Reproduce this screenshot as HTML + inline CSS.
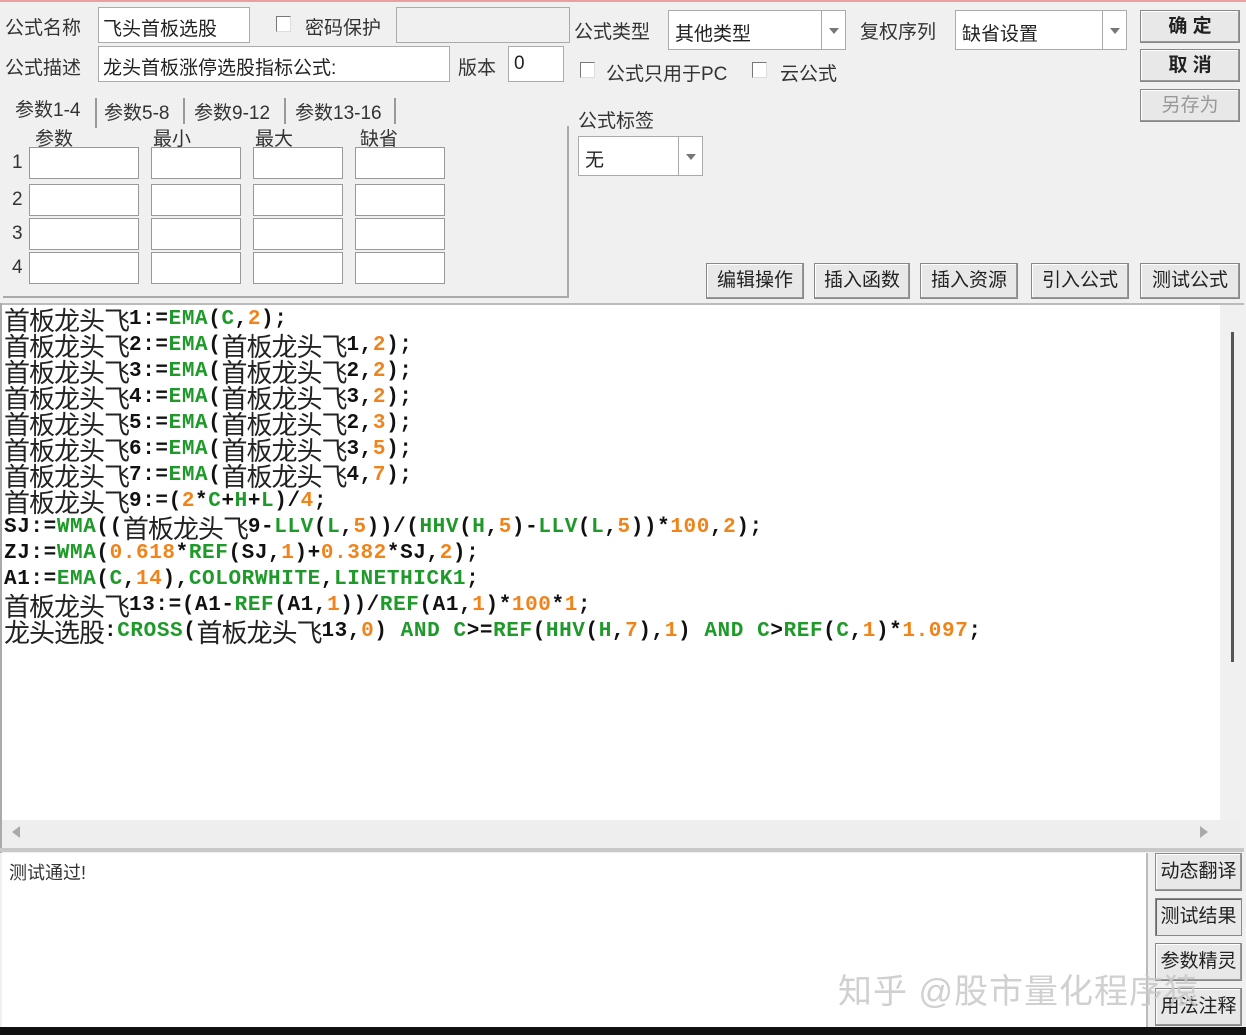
<!DOCTYPE html>
<html><head><meta charset="utf-8"><style>
*{margin:0;padding:0;box-sizing:border-box}
body{width:1246px;height:1035px;background:#f0f0f0;position:relative;overflow:hidden;font-family:"Liberation Sans","Noto Sans CJK SC",sans-serif;font-size:19px;color:#222}
.a{position:absolute}
.lbl{position:absolute;font-size:19px;color:#333;white-space:nowrap}
.box{position:absolute;background:#fff;border:1px solid #aaa}
.btn{position:absolute;background:#e8e8e8;border:1px solid #888;box-shadow:inset -1px -1px 0 #999,inset 1px 1px 0 #fff;text-align:center;font-size:19px;color:#222;white-space:nowrap}
.cb{position:absolute;width:15px;height:16px;border:1px solid #777;border-right-color:#ddd;border-bottom-color:#ddd;background:#fff}
.dd{position:absolute;top:0;right:0;bottom:0;width:24px;border-left:1px solid #aaa}
.dd:after{content:"";position:absolute;left:7px;top:50%;margin-top:-2px;border:5px solid transparent;border-top:6px solid #777;border-bottom:0}
.code{position:absolute;left:4px;top:307px;font-family:"Liberation Mono",monospace;font-weight:bold;font-size:21px;letter-spacing:0.6px;color:#111}
.code div{height:26px;line-height:26px;white-space:pre;overflow:visible}
.c{font-family:"Noto Sans CJK SC",sans-serif;font-weight:normal;font-size:26px;letter-spacing:-1px;color:#222;line-height:26px;display:inline-block;height:26px;vertical-align:top}
.g{color:#1f9a2a}.o{color:#f0841a}
.pin{position:absolute;background:#fff;border:1px solid #999;height:32px}
</style></head><body>
<div class="a" style="left:0;top:0;width:1246px;height:2px;background:#e8a0a0"></div>

<div class="lbl" style="left:5px;top:13px">公式名称</div>
<div class="box" style="left:98px;top:7px;width:152px;height:36px;padding:6px 4px">飞头首板选股</div>
<div class="cb" style="left:276px;top:16px"></div>
<div class="lbl" style="left:305px;top:13px">密码保护</div>
<div class="box" style="left:396px;top:7px;width:174px;height:36px;background:#f0f0f0"></div>

<div class="lbl" style="left:5px;top:53px">公式描述</div>
<div class="box" style="left:98px;top:46px;width:352px;height:36px;padding:6px 4px">龙头首板涨停选股指标公式:</div>
<div class="lbl" style="left:458px;top:53px">版本</div>
<div class="box" style="left:508px;top:46px;width:56px;height:36px;padding:6px 5px">0</div>

<div class="lbl" style="left:15px;top:95px">参数1-4</div>
<div class="a" style="left:95px;top:98px;width:2px;height:30px;background:#999"></div>
<div class="lbl" style="left:104px;top:98px">参数5-8</div>
<div class="a" style="left:183px;top:98px;width:2px;height:26px;background:#999"></div>
<div class="lbl" style="left:194px;top:98px">参数9-12</div>
<div class="a" style="left:284px;top:98px;width:2px;height:26px;background:#999"></div>
<div class="lbl" style="left:295px;top:98px">参数13-16</div>
<div class="a" style="left:394px;top:98px;width:2px;height:26px;background:#999"></div>
<div class="a" style="left:3px;top:126px;width:566px;height:172px;border-right:2px solid #aaa;border-bottom:2px solid #aaa"></div>
<div class="lbl" style="left:35px;top:124px">参数</div>
<div class="lbl" style="left:153px;top:124px">最小</div>
<div class="lbl" style="left:255px;top:124px">最大</div>
<div class="lbl" style="left:360px;top:124px">缺省</div>

<div class="lbl" style="left:12px;top:152px">1</div><div class="lbl" style="left:12px;top:189px">2</div><div class="lbl" style="left:12px;top:223px">3</div><div class="lbl" style="left:12px;top:257px">4</div>
<div class="pin" style="left:29px;top:147px;width:110px"></div><div class="pin" style="left:151px;top:147px;width:90px"></div><div class="pin" style="left:253px;top:147px;width:90px"></div><div class="pin" style="left:355px;top:147px;width:90px"></div>
<div class="pin" style="left:29px;top:184px;width:110px"></div><div class="pin" style="left:151px;top:184px;width:90px"></div><div class="pin" style="left:253px;top:184px;width:90px"></div><div class="pin" style="left:355px;top:184px;width:90px"></div>
<div class="pin" style="left:29px;top:218px;width:110px"></div><div class="pin" style="left:151px;top:218px;width:90px"></div><div class="pin" style="left:253px;top:218px;width:90px"></div><div class="pin" style="left:355px;top:218px;width:90px"></div>
<div class="pin" style="left:29px;top:252px;width:110px"></div><div class="pin" style="left:151px;top:252px;width:90px"></div><div class="pin" style="left:253px;top:252px;width:90px"></div><div class="pin" style="left:355px;top:252px;width:90px"></div>

<div class="lbl" style="left:574px;top:17px">公式类型</div>
<div class="box" style="left:668px;top:10px;width:178px;height:40px;padding:8px 6px">其他类型<div class="dd"></div></div>
<div class="lbl" style="left:860px;top:17px">复权序列</div>
<div class="box" style="left:955px;top:10px;width:172px;height:40px;padding:8px 6px">缺省设置<div class="dd"></div></div>
<div class="cb" style="left:580px;top:62px"></div>
<div class="lbl" style="left:606px;top:59px">公式只用于PC</div>
<div class="cb" style="left:752px;top:62px"></div>
<div class="lbl" style="left:780px;top:59px">云公式</div>
<div class="lbl" style="left:578px;top:106px">公式标签</div>
<div class="box" style="left:578px;top:136px;width:125px;height:40px;padding:8px 6px">无<div class="dd"></div></div>

<div class="btn" style="left:1140px;top:10px;width:100px;height:33px;line-height:31px;font-weight:bold">确 定</div>
<div class="btn" style="left:1140px;top:49px;width:100px;height:33px;line-height:31px;font-weight:bold">取 消</div>
<div class="btn" style="left:1140px;top:89px;width:100px;height:33px;line-height:31px;color:#999">另存为</div>

<div class="btn" style="left:706px;top:263px;width:98px;height:36px;line-height:34px">编辑操作</div>
<div class="btn" style="left:814px;top:263px;width:96px;height:36px;line-height:34px">插入函数</div>
<div class="btn" style="left:920px;top:263px;width:98px;height:36px;line-height:34px">插入资源</div>
<div class="btn" style="left:1031px;top:263px;width:98px;height:36px;line-height:34px">引入公式</div>
<div class="btn" style="left:1140px;top:263px;width:100px;height:36px;line-height:34px">测试公式</div>

<div class="a" style="left:0;top:303px;width:1244px;height:2px;background:#bbb"></div>
<div class="a" style="left:2px;top:305px;width:1218px;height:515px;background:#fff"></div>
<div class="a" style="left:0;top:303px;width:2px;height:550px;background:#aaa"></div>
<div class="a" style="left:1231px;top:332px;width:3px;height:330px;background:#555"></div>
<div class="a" style="left:2px;top:820px;width:1238px;height:28px;background:#eee"></div>
<div class="a" style="left:12px;top:826px;border:6px solid transparent;border-right:8px solid #aaa;border-left:0;height:0"></div>
<div class="a" style="left:1200px;top:826px;border:6px solid transparent;border-left:8px solid #aaa;border-right:0;height:0"></div>
<div class="a" style="left:0;top:848px;width:1244px;height:4px;background:#c8c8c8"></div>

<div class="code"><div><span class="c">首板龙头飞</span>1:=<span class="g">EMA</span>(<span class="g">C</span>,<span class="o">2</span>);</div><div><span class="c">首板龙头飞</span>2:=<span class="g">EMA</span>(<span class="c">首板龙头飞</span>1,<span class="o">2</span>);</div><div><span class="c">首板龙头飞</span>3:=<span class="g">EMA</span>(<span class="c">首板龙头飞</span>2,<span class="o">2</span>);</div><div><span class="c">首板龙头飞</span>4:=<span class="g">EMA</span>(<span class="c">首板龙头飞</span>3,<span class="o">2</span>);</div><div><span class="c">首板龙头飞</span>5:=<span class="g">EMA</span>(<span class="c">首板龙头飞</span>2,<span class="o">3</span>);</div><div><span class="c">首板龙头飞</span>6:=<span class="g">EMA</span>(<span class="c">首板龙头飞</span>3,<span class="o">5</span>);</div><div><span class="c">首板龙头飞</span>7:=<span class="g">EMA</span>(<span class="c">首板龙头飞</span>4,<span class="o">7</span>);</div><div><span class="c">首板龙头飞</span>9:=(<span class="o">2</span>*<span class="g">C</span>+<span class="g">H</span>+<span class="g">L</span>)/<span class="o">4</span>;</div><div>SJ:=<span class="g">WMA</span>((<span class="c">首板龙头飞</span>9-<span class="g">LLV</span>(<span class="g">L</span>,<span class="o">5</span>))/(<span class="g">HHV</span>(<span class="g">H</span>,<span class="o">5</span>)-<span class="g">LLV</span>(<span class="g">L</span>,<span class="o">5</span>))*<span class="o">100</span>,<span class="o">2</span>);</div><div>ZJ:=<span class="g">WMA</span>(<span class="o">0.618</span>*<span class="g">REF</span>(SJ,<span class="o">1</span>)+<span class="o">0.382</span>*SJ,<span class="o">2</span>);</div><div>A1:=<span class="g">EMA</span>(<span class="g">C</span>,<span class="o">14</span>),<span class="g">COLORWHITE</span>,<span class="g">LINETHICK1</span>;</div><div><span class="c">首板龙头飞</span>13:=(A1-<span class="g">REF</span>(A1,<span class="o">1</span>))/<span class="g">REF</span>(A1,<span class="o">1</span>)*<span class="o">100</span>*<span class="o">1</span>;</div><div><span class="c">龙头选股</span>:<span class="g">CROSS</span>(<span class="c">首板龙头飞</span>13,<span class="o">0</span>) <span class="g">AND</span> <span class="g">C</span>&gt;=<span class="g">REF</span>(<span class="g">HHV</span>(<span class="g">H</span>,<span class="o">7</span>),<span class="o">1</span>) <span class="g">AND</span> <span class="g">C</span>&gt;<span class="g">REF</span>(<span class="g">C</span>,<span class="o">1</span>)*<span class="o">1.097</span>;</div></div>

<div class="a" style="left:2px;top:853px;width:1146px;height:174px;background:#fff;border-right:2px solid #bbb"></div>
<div class="lbl" style="left:9px;top:859px;font-size:18px">测试通过!</div>
<div class="btn" style="left:1155px;top:853px;width:87px;height:38px;line-height:36px">动态翻译</div>
<div class="btn" style="left:1155px;top:898px;width:87px;height:38px;line-height:36px;box-shadow:inset 1px 1px 0 #666">测试结果</div>
<div class="btn" style="left:1155px;top:943px;width:87px;height:38px;line-height:36px">参数精灵</div>
<div class="btn" style="left:1155px;top:988px;width:87px;height:38px;line-height:36px">用法注释</div>
<div class="lbl" style="left:838px;top:964px;font-size:34px;color:rgba(200,200,200,0.85);letter-spacing:1px">知乎 @股市量化程序猿</div>
<div class="a" style="left:0;top:1027px;width:1246px;height:8px;background:#111"></div>
</body></html>
